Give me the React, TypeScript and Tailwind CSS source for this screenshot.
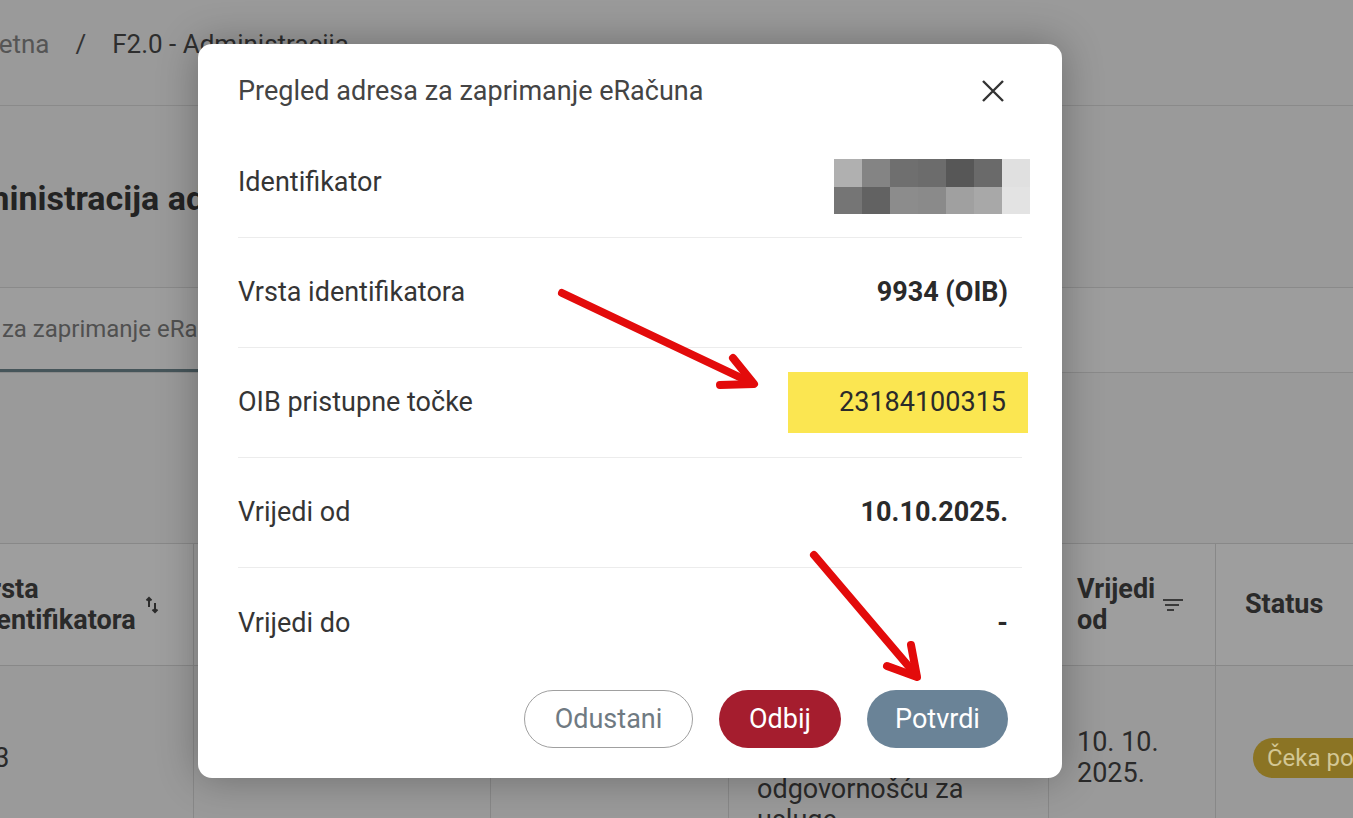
import React from "react"

const pixels = [
  ["#b0b0b0", "#848484", "#6f6f6f", "#6c6c6c", "#575757", "#6a6a6a", "#e0e0e0"],
  ["#757575", "#626262", "#8c8c8c", "#8a8a8a", "#a0a0a0", "#a8a8a8", "#e3e3e3"],
]

function SortIcon() {
  return (
    <svg width="16" height="20" viewBox="0 0 16 20" fill="none" stroke="#2b2b2b" strokeWidth="2">
      <path d="M5 12V3M2.5 5.5L5 3l2.5 2.5" />
      <path d="M11 8v9M8.5 14.5L11 17l2.5-2.5" />
    </svg>
  )
}

function FilterIcon() {
  return (
    <svg width="24" height="16" viewBox="0 0 24 16" fill="none" stroke="#3a3a3a" strokeWidth="2">
      <path d="M2 3h20M4 8h14M6 13h7" />
    </svg>
  )
}

function Row({ label, children, last }: { label: string; children: React.ReactNode; last?: boolean }) {
  return (
    <div
      className={
        "flex h-[110px] items-center justify-between pr-[14px] " +
        (last ? "" : "border-b border-[#ececec]")
      }
    >
      <span className="text-[27px] text-[#353535]">{label}</span>
      {children}
    </div>
  )
}

export default function App() {
  return (
    <div className="relative h-[818px] w-full overflow-hidden bg-[#9a9a9a] font-['Roboto',sans-serif]">
      {/* page behind the dialog */}
      <div className="flex h-[106px] items-start gap-[26px] border-b border-[#8a8a8a] pt-[28px] text-[26px] leading-[32px]">
        <span className="-ml-[46px] text-[#555]">Početna</span>
        <span className="text-[#333]">/</span>
        <span className="text-[#2e2e2e]">F2.0 - Administracija</span>
      </div>

      <div className="h-[181px] pt-[73px]">
        <h1 className="-ml-[62px] whitespace-nowrap text-[34px] font-bold leading-[38px] text-[#232323]">
          Administracija adresa
        </h1>
      </div>

      <div className="flex h-[86px] border-y border-[#8a8a8a] bg-[#9d9d9d]">
        <div className="-ml-[79px] flex w-[290px] shrink-0 items-center border-b-[3px] border-[#46555a] text-[24px] text-[#505050]">
          <span className="whitespace-nowrap">Adrese za zaprimanje eRačuna</span>
        </div>
      </div>

      <div className="mt-[170px] -ml-[26px] border-t border-[#888]">
        <div className="flex h-[122px] border-b border-[#888] bg-[#9e9e9e] text-[27px] font-bold leading-[31px] text-[#2a2a2a]">
          <div className="flex w-[219px] shrink-0 items-center gap-[8px]">
            <span>
              Vrsta
              <br />
              identifikatora
            </span>
            <SortIcon />
          </div>
          <div className="w-[297px] shrink-0 border-l border-[#888]" />
          <div className="w-[238px] shrink-0 border-l border-[#888]" />
          <div className="w-[320px] shrink-0 border-l border-[#888]" />
          <div className="flex w-[167px] shrink-0 items-center gap-[6px] border-l border-[#888] pl-[28px]">
            <span>
              Vrijedi
              <br />
              od
            </span>
            <FilterIcon />
          </div>
          <div className="flex w-[200px] shrink-0 items-center border-l border-[#888] pl-[29px]">Status</div>
        </div>
        <div className="flex h-[184px] text-[27px] leading-[31px] text-[#2a2a2a]">
          <div className="flex w-[219px] shrink-0 items-center">
            <span className="-ml-[10px]">993</span>
          </div>
          <div className="w-[297px] shrink-0 border-l border-[#888]" />
          <div className="w-[238px] shrink-0 border-l border-[#888]" />
          <div className="flex w-[320px] shrink-0 items-center border-l border-[#888] pl-[28px]">
            <span>
              Trgovačko
              <br />
              društvo s
              <br />
              ograničenom
              <br />
              odgovornošću za
              <br />
              usluge
            </span>
          </div>
          <div className="flex w-[167px] shrink-0 items-center border-l border-[#888] pl-[28px]">
            <span>
              10. 10.
              <br />
              2025.
            </span>
          </div>
          <div className="flex w-[200px] shrink-0 items-center border-l border-[#888] pl-[37px]">
            <span className="whitespace-nowrap rounded-full bg-[#8b7424] px-[14px] py-[4px] text-[24px] leading-[32px] text-[#d3c795]">
              Čeka potvrdu
            </span>
          </div>
        </div>
      </div>

      {/* dialog */}
      <div className="absolute left-[198px] top-[44px] flex h-[734px] w-[864px] flex-col rounded-[14px] bg-white pl-[40px] pr-[40px] pt-[29px] shadow-[0_0_40px_rgba(0,0,0,0.3)]">
        <div className="flex h-[36px] items-center justify-between">
          <span className="text-[27px] text-[#444]">Pregled adresa za zaprimanje eRačuna</span>
          <svg width="22" height="22" viewBox="0 0 22 22" className="mr-[18px]" stroke="#333" strokeWidth="2.4">
            <path d="M1 1l20 20M21 1L1 21" />
          </svg>
        </div>

        <div className="mt-[19px]">
          <Row label="Identifikator">
            <div className="-mr-[22px] mt-[8px] grid grid-cols-[repeat(7,28px)] grid-rows-[28px_27px]">
              {pixels.flat().map((c, i) => (
                <div key={i} style={{ background: c }} />
              ))}
            </div>
          </Row>
          <Row label="Vrsta identifikatora">
            <span className="text-[27px] font-bold text-[#2a2a2a]">9934 (OIB)</span>
          </Row>
          <Row label="OIB pristupne točke">
            <span className="-mr-[20px] flex h-[61px] w-[240px] items-center justify-end bg-[#fbe651] pr-[22px] text-[27px] text-[#2a2a2a]">
              23184100315
            </span>
          </Row>
          <Row label="Vrijedi od">
            <span className="text-[27px] font-bold text-[#2a2a2a]">10.10.2025.</span>
          </Row>
          <Row label="Vrijedi do" last>
            <span className="text-[27px] font-bold text-[#2a2a2a]">-</span>
          </Row>
        </div>

        <div className="mt-[12px] flex justify-end gap-[26px] pr-[14px] text-[27px]">
          <button className="h-[58px] w-[169px] rounded-full border-[1.5px] border-[#a0a0a0] text-[#6f7a82]">
            Odustani
          </button>
          <button className="h-[58px] w-[122px] rounded-full bg-[#a51d2e] text-white">Odbij</button>
          <button className="h-[58px] w-[141px] rounded-full bg-[#6a8397] text-white">Potvrdi</button>
        </div>
      </div>

      {/* annotation arrows */}
      <svg className="pointer-events-none absolute inset-0" width="1353" height="818" fill="none" stroke="#e30b0b" strokeWidth="8" strokeLinecap="round" strokeLinejoin="round">
        <path d="M562 293L752 383" />
        <path d="M733 358L754 384L720 385" />
        <path d="M814 555L916 675" />
        <path d="M911 645L917 677L887 666" />
      </svg>
    </div>
  )
}
